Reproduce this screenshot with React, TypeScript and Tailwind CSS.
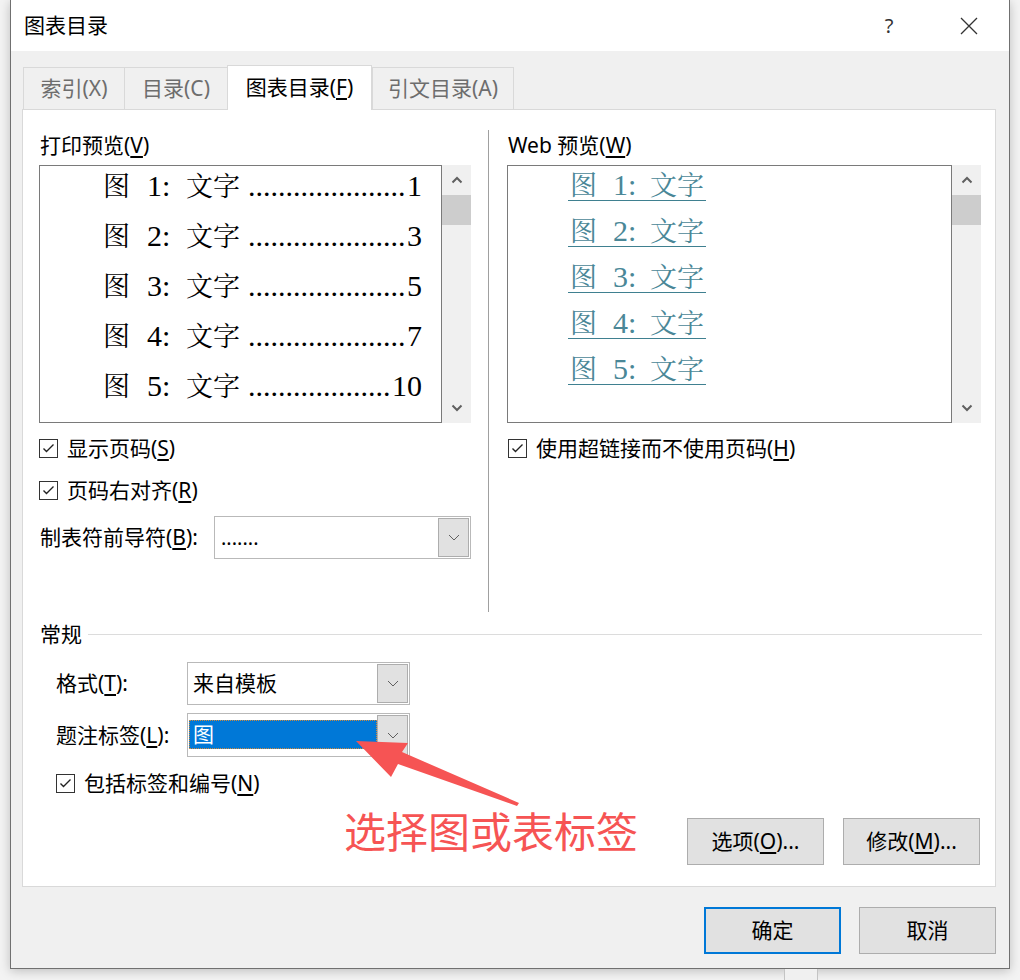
import React from "react";

const Check = () => (
  <span className="flex h-[19px] w-[19px] shrink-0 items-center justify-center border border-[#333333] bg-white">
    <svg width="17" height="17" viewBox="0 0 17 17">
      <path d="M3.5 8.5l3 3L13.5 4.5" stroke="#222" strokeWidth="1.4" fill="none" />
    </svg>
  </span>
);

const CheckRow = ({ children, className = "" }: { children: React.ReactNode; className?: string }) => (
  <div className={`flex h-[30px] items-center gap-[9px] ${className}`}>
    <Check />
    <span className="leading-none">{children}</span>
  </div>
);

const DropArrow = () => (
  <svg width="12" height="7" viewBox="0 0 12 7">
    <path d="M1 1l5 5 5-5" stroke="#606060" strokeWidth="1" fill="none" />
  </svg>
);

const Select = ({ width, children, h = "h-[43px]" }: { width: string; children: React.ReactNode; h?: string }) => (
  <div className={`flex ${width} ${h} border border-[#b9b9b9] bg-white p-px`}>
    <div className="flex min-w-0 flex-1 items-center">{children}</div>
    <div className="flex w-[31px] items-center justify-center border border-[#adadad] bg-[#e1e1e1]">
      <DropArrow />
    </div>
  </div>
);

const ScrollBar = () => (
  <div className="flex w-[29px] flex-col bg-[#f0f0f0]">
    <div className="flex h-[30px] items-center justify-center">
      <svg width="12" height="8" viewBox="0 0 12 8">
        <path d="M1.5 6.5L6 2l4.5 4.5" stroke="#606060" strokeWidth="2" fill="none" />
      </svg>
    </div>
    <div className="h-[30px] bg-[#cdcdcd]" />
    <div className="flex-1" />
    <div className="flex h-[30px] items-center justify-center">
      <svg width="12" height="8" viewBox="0 0 12 8">
        <path d="M1.5 1.5L6 6l4.5-4.5" stroke="#606060" strokeWidth="2" fill="none" />
      </svg>
    </div>
  </div>
);

const serif = "font-['Liberation_Serif','Noto_Serif_CJK_SC','Noto_Sans_CJK_SC',serif]";

const printRows = [
  { n: "1", p: "1" },
  { n: "2", p: "3" },
  { n: "3", p: "5" },
  { n: "4", p: "7" },
  { n: "5", p: "10" },
];

const Tab = ({ children, w, active = false, last = false }: { children: React.ReactNode; w: string; active?: boolean; last?: boolean }) => (
  <div
    className={`flex ${w} items-center justify-center border-t border-l border-[#d9d9d9] leading-none ${
      active ? "relative z-10 -mb-px h-[45px] bg-white pb-[2px] text-black" : "h-[42px] bg-[#f0f0f0] text-[#6d6d6d]"
    } ${last ? "border-r" : ""} ${active ? "border-r" : ""}`}
  >
    {children}
  </div>
);

const Button = ({ children, primary = false }: { children: React.ReactNode; primary?: boolean }) => (
  <div
    className={`flex h-[47px] w-[137px] items-center justify-center bg-[#e1e1e1] leading-none ${
      primary ? "border-2 border-[#0078d7]" : "border border-[#adadad]"
    }`}
  >
    {children}
  </div>
);

export default function App() {
  return (
    <div className="relative flex h-[980px] w-[1020px] flex-col overflow-hidden bg-[#f3f3f3] font-['Noto_Sans','Noto_Sans_CJK_SC',sans-serif] text-[21px] text-[#000]">
      {/* dialog */}
      <div className="ml-[10px] flex h-[969px] w-[1000px] shrink-0 flex-col border-x border-b border-[#707070] bg-[#f0f0f0] shadow-[0_2px_10px_rgba(0,0,0,0.22)]">
        {/* title bar */}
        <div className="flex h-[51px] shrink-0 items-center bg-white pl-[13px] pr-[20px]">
          <span className="leading-none">图表目录</span>
          <div className="ml-auto flex items-center">
            <span className="flex w-[40px] justify-center text-[20px] leading-none text-[#333]">?</span>
            <span className="ml-[40px] flex w-[40px] justify-center">
              <svg width="18" height="18" viewBox="0 0 18 18">
                <path d="M1 1L17 17M17 1L1 17" stroke="#333" strokeWidth="1.3" fill="none" />
              </svg>
            </span>
          </div>
        </div>

        {/* body */}
        <div className="flex flex-1 flex-col pl-[11px] pr-[13px] pt-[14px]">
          {/* tabs */}
          <div className="ml-px flex h-[44px] items-end">
            <Tab w="w-[101px]">索引(X)</Tab>
            <Tab w="w-[103px]">目录(C)</Tab>
            <Tab w="w-[145px]" active>
              图表目录(<u className="underline-offset-[3px]">F</u>)
            </Tab>
            <Tab w="w-[142px]" last>
              引文目录(A)
            </Tab>
          </div>

          {/* panel */}
          <div className="flex h-[778px] w-[974px] flex-col border border-[#d9d9d9] bg-white">
            <div className="mt-[20px] flex h-[482px] pl-[16px]">
              {/* left column */}
              <div className="flex w-[432px] flex-col">
                <div className="flex h-[30px] items-center pl-px leading-none">
                  打印预览(<u className="underline-offset-[3px]">V</u>)
                </div>
                <div className="mt-[5px] flex h-[258px]">
                  <div className={`flex w-[403px] flex-col gap-[10px] border border-[#7a7a7a] bg-white ${serif}`}>
                    {printRows.map((r) => (
                      <div key={r.n} className="flex h-[40px] items-center pl-[63px] pr-[19px]">
                        <div className="flex flex-1 items-baseline leading-none text-[30px] text-black">
                          <span className="w-[44px] shrink-0 text-[27px]">图</span>
                          <span className="w-[39px] shrink-0">{r.n}:</span>
                          <span className="w-[58px] shrink-0 text-[27px]">文字</span>
                          <span className="ml-[4px] shrink-0 whitespace-nowrap">
                            {".".repeat(r.p.length === 1 ? 21 : 19)}
                          </span>
                          <span className="ml-auto shrink-0">{r.p}</span>
                        </div>
                      </div>
                    ))}
                  </div>
                  <ScrollBar />
                </div>
                <CheckRow className="mt-[10px]">
                  显示页码(<u className="underline-offset-[3px]">S</u>)
                </CheckRow>
                <CheckRow className="mt-[12px]">
                  页码右对齐(<u className="underline-offset-[3px]">R</u>)
                </CheckRow>
                <div className="mt-[11px] flex h-[43px] items-center">
                  <span className="w-[175px] pl-px leading-none">
                    制表符前导符(<u className="underline-offset-[3px]">B</u>):
                  </span>
                  <Select width="w-[257px]">
                    <span className="pl-[5px] text-[20px] leading-none">.......</span>
                  </Select>
                </div>
              </div>

              {/* divider */}
              <div className="ml-[17px] w-px bg-[#a0a0a0]" />

              {/* right column */}
              <div className="ml-[18px] flex w-[474px] flex-col">
                <div className="flex h-[30px] items-center pl-px leading-none">
                  Web 预览(<u className="underline-offset-[3px]">W</u>)
                </div>
                <div className="mt-[5px] flex h-[258px]">
                  <div className={`flex w-[445px] flex-col gap-[8px] border border-[#7a7a7a] bg-white ${serif}`}>
                    {printRows.map((r) => (
                      <div key={r.n} className="flex h-[38px] items-center pl-[60px]">
                        <div className="flex items-baseline border-b border-[#3f8090] leading-none text-[30px] text-[#4a8797]">
                          <span className="w-[45px] shrink-0 pl-[2px] text-[27px]">图</span>
                          <span className="w-[37px] shrink-0">{r.n}:</span>
                          <span className="w-[56px] shrink-0 text-[27px]">文字</span>
                        </div>
                      </div>
                    ))}
                  </div>
                  <ScrollBar />
                </div>
                <CheckRow className="ml-px mt-[10px]">
                  使用超链接而不使用页码(<u className="underline-offset-[3px]">H</u>)
                </CheckRow>
              </div>
            </div>

            {/* general */}
            <div className="mt-[7px] flex h-[30px] items-center pl-[17px] pr-[13px]">
              <span className="leading-none">常规</span>
              <div className="ml-[6px] h-px flex-1 bg-[#dcdcdc]" />
            </div>
            <div className="mt-[13px] flex h-[43px] items-center pl-[33px]">
              <span className="w-[131px] leading-none">
                格式(<u className="underline-offset-[3px]">T</u>):
              </span>
              <Select width="w-[223px]">
                <span className="pl-[4px] leading-none">来自模板</span>
              </Select>
            </div>
            <div className="mt-[8px] flex h-[44px] items-center pl-[33px]">
              <span className="w-[131px] leading-none">
                题注标签(<u className="underline-offset-[3px]">L</u>):
              </span>
              <Select width="w-[223px]" h="h-[44px]">
                <div className="mb-[2px] flex h-[29px] flex-1 items-center border border-dotted border-[#d08a3c] bg-[#0078d7] pl-[3px] leading-none text-white">
                  图
                </div>
              </Select>
            </div>
            <CheckRow className="mt-[11px] pl-[33px]">
              包括标签和编号(<u className="underline-offset-[3px]">N</u>)
            </CheckRow>
            <div className="mt-[20px] flex justify-end gap-[19px] pr-[15px]">
              <Button>
                选项(<u className="underline-offset-[3px]">O</u>)...
              </Button>
              <Button>
                修改(<u className="underline-offset-[3px]">M</u>)...
              </Button>
            </div>
          </div>

          {/* dialog buttons */}
          <div className="mt-[20px] flex justify-end gap-[18px]">
            <Button primary>确定</Button>
            <Button>取消</Button>
          </div>
        </div>
      </div>

      {/* window behind the dialog */}
      <div className="flex flex-1 pl-[784px]">
        <div className="w-[34px] border-x border-[#c4c4c4] bg-[#f0f0f0]" />
      </div>

      {/* red annotation */}
      <svg className="pointer-events-none absolute left-0 top-0" width="1020" height="980">
        <polygon points="356,741 408,743 402,752 519,803 517,806 398,764 391,777" fill="#f65454" />
      </svg>
      <div className="absolute left-[344px] top-[811px] text-[42px] leading-none text-[#f65454]">
        选择图或表标签
      </div>
    </div>
  );
}
